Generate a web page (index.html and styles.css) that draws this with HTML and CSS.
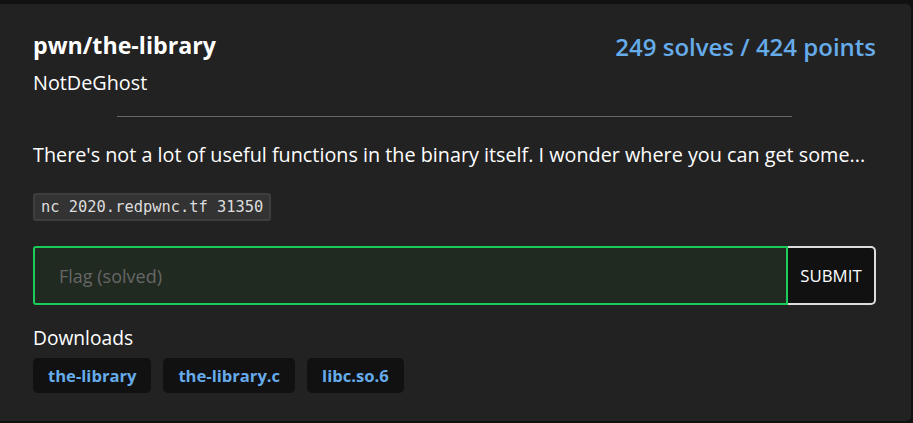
FILE: index.html
```html
<!DOCTYPE html>
<html>
<head>
<meta charset="utf-8">
<link rel="stylesheet" href="styles.css">
</head>
<body>
<div class="card">
  <div class="head">
    <div class="titles">
      <div class="title">pwn/the-library</div>
      <div class="author">NotDeGhost</div>
    </div>
    <div class="stats">249 solves / 424 points</div>
  </div>
  <hr class="rule">
  <p class="desc">There's not a lot of useful functions in the binary itself. I wonder where you can get some...</p>
  <div class="codewrap"><code class="code">nc 2020.redpwnc.tf 31350</code></div>
  <form class="flagform">
    <input class="flag" type="text" placeholder="Flag (solved)">
    <button class="submit" type="button">SUBMIT</button>
  </form>
  <div class="dltitle">Downloads</div>
  <div class="dls">
    <a class="dl">the-library</a>
    <a class="dl">the-library.c</a>
    <a class="dl">libc.so.6</a>
  </div>
</div>
</body>
</html>
```
FILE: styles.css
```css
html, body { margin: 0; padding: 0; }
body {
  background: #111;
  font-family: "Open Sans", "Noto Sans", sans-serif;
  color: #fff;
  padding-top: 4px;
  height: 423px;
  box-sizing: border-box;
  overflow: hidden;
}
.card {
  background: #222;
  width: 911px;
  height: 417px;
  box-sizing: border-box;
  border-radius: 0 5px 5px 0;
  padding: 26px 35px 0 33px;
}
.head {
  display: flex;
  justify-content: space-between;
  align-items: flex-start;
}
.title {
  font-size: 23.2px;
  font-weight: 700;
  line-height: 30px;
}
.author {
  font-size: 19.8px;
  line-height: 26px;
  margin-top: 10px;
}
.stats {
  color: #66abea;
  font-size: 24px;
  font-weight: 600;
  line-height: 30px;
  margin-top: 2px;
}
.rule {
  width: 80%;
  margin: 20px auto 0;
  border: 0;
  border-top: 1px solid #666;
  height: 0;
}
.desc {
  font-size: 19.8px;
  line-height: 28px;
  margin: 24px 0 0;
}
.codewrap { margin-top: 24px; line-height: 0; }
.code {
  display: inline-block;
  font-family: "DejaVu Sans Mono", "Liberation Mono", monospace;
  font-size: 15.4px;
  line-height: 24px;
  color: #ddd;
  background: #333;
  border: 2px solid #3e3e3e;
  border-radius: 3px;
  padding: 0 6px;
}
.flagform {
  display: flex;
  margin-top: 25px;
  height: 59px;
}
.flag {
  flex: 1;
  background: #212a21;
  border: 2px solid #1ccc5b;
  border-radius: 3px 0 0 3px;
  padding: 0 24px;
  font-family: inherit;
  font-size: 18px;
  color: #fff;
  outline: none;
}
.flag::placeholder { color: #666; }
.submit {
  width: 88px;
  background: #111;
  border: 2px solid #ddd;
  border-left: 0;
  border-radius: 0 5px 5px 0;
  color: #fff;
  font-family: inherit;
  font-size: 16.8px;
  padding: 0;
}
.dltitle {
  font-size: 19.2px;
  line-height: 26px;
  margin-top: 20px;
}
.dls {
  display: flex;
  gap: 12px;
  margin-top: 7px;
}
.dl {
  background: #111;
  color: #66abea;
  font-weight: 700;
  font-size: 16.6px;
  line-height: 35px;
  padding: 0 15px;
  border-radius: 5px;
}
```
